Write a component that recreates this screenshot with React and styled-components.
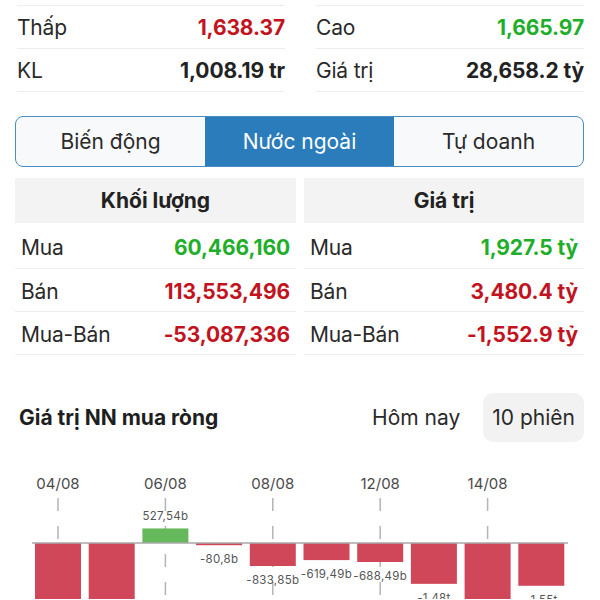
import React from "react";
import styled, { createGlobalStyle } from "styled-components";

const GlobalStyle = createGlobalStyle`
  body {
    margin: 0;
    background: #ffffff;
    font-family: Inter, "Noto Sans", sans-serif;
    color: #222;
  }
`;

const RED = "#c2141f";
const GREEN = "#1fae2a";

const Page = styled.div`
  width: 600px;
  height: 600px;
  overflow: hidden;
  background: #fff;
`;

const StatsGrid = styled.div`
  display: grid;
  grid-template-columns: 268px 268px;
  column-gap: 31px;
  padding: 5px 16px 0 17px;
`;

const StatCol = styled.div`
  border-top: 1px solid #ededed;
`;

const StatRow = styled.div`
  display: flex;
  align-items: center;
  justify-content: space-between;
  height: 42px;
  border-bottom: 1px solid #ededed;
  font-size: 21px;
`;

const Label = styled.span`
  color: #2a2a2a;
  letter-spacing: -0.2px;
`;

const Value = styled.span`
  font-weight: 700;
  color: ${(p) => p.color || "#222"};
  letter-spacing: -0.1px;
`;

const Tabs = styled.div`
  display: flex;
  margin: 24px 16px 0 15px;
  height: 51px;
  border: 1.5px solid #4a8dc4;
  border-radius: 8px;
  overflow: hidden;
  box-sizing: border-box;
  background: #f8f9fa;
`;

const Tab = styled.div`
  flex: 1;
  display: flex;
  align-items: center;
  justify-content: center;
  font-size: 21px;
  color: ${(p) => (p.active ? "#fff" : "#2a2a2a")};
  background: ${(p) => (p.active ? "#2a7cbb" : "transparent")};
`;

const Table = styled.div`
  display: grid;
  grid-template-columns: 281px 280px;
  column-gap: 8px;
  padding: 11px 16px 0 15px;
`;

const TableCol = styled.div``;

const TableHead = styled.div`
  height: 45px;
  display: flex;
  align-items: center;
  justify-content: center;
  background: #f3f3f3;
  font-size: 21px;
  font-weight: 700;
  color: #222;
`;

const TableRow = styled.div`
  display: flex;
  align-items: center;
  justify-content: space-between;
  box-sizing: border-box;
  height: ${(p) => (p.first ? "46px" : "43px")};
  padding: ${(p) => (p.first ? "4px" : "2px")} 6px 0;
  border-bottom: 1px solid #ededed;
  font-size: 21px;
`;

const ChartHeader = styled.div`
  display: flex;
  align-items: center;
  justify-content: space-between;
  margin-top: 38px;
  padding: 0 16px 0 19px;
`;

const ChartTitle = styled.div`
  font-size: 21px;
  font-weight: 700;
  color: #1e1e1e;
`;

const Periods = styled.div`
  display: flex;
  align-items: center;
`;

const Period = styled.div`
  height: 49px;
  padding: 0 9px;
  margin-left: ${(p) => (p.active ? "14px" : "0")};
  display: flex;
  align-items: center;
  border-radius: 10px;
  font-size: 21px;
  color: #2a2a2a;
  background: ${(p) => (p.active ? "#f2f2f2" : "transparent")};
`;

const ChartSvg = styled.svg`
  display: block;
  font-family: Inter, "Noto Sans", sans-serif;
`;

const bars = [
  { v: -2200 },
  { v: -2100 },
  { v: 527.54, label: "527,54b" },
  { v: -80.8, label: "-80,8b" },
  { v: -833.85, label: "-833,85b" },
  { v: -619.49, label: "-619,49b" },
  { v: -688.49, label: "-688,49b" },
  { v: -1480, label: "-1,48t" },
  { v: -2300 },
  { v: -1550, label: "-1,55t" },
];

const dates = ["04/08", "06/08", "08/08", "12/08", "14/08"];

const Chart = () => {
  const base = 101;
  const scale = 0.0276;
  const x0 = 35;
  const step = 53.7;
  const w = 46;
  return (
    <ChartSvg width="600" height="157" viewBox="0 0 600 157">
      {dates.map((d, i) => {
        const cx = x0 + step * i * 2 + w / 2;
        return (
          <g key={d}>
            <line
              x1={cx}
              x2={cx}
              y1={56}
              y2={157}
              stroke="#b4b4b4"
              strokeWidth="1.5"
              strokeDasharray="13 15"
            />
            <text x={cx} y={47} textAnchor="middle" fontSize="15" fill="#4a4a4a">
              {d}
            </text>
          </g>
        );
      })}
      {bars.map((b, i) => {
        const x = x0 + step * i;
        const h = Math.max(2, Math.abs(b.v) * scale);
        const pos = b.v > 0;
        const y = pos ? base - h : base;
        return (
          <g key={i}>
            <rect x={x} y={y} width={w} height={h} fill={pos ? "#66b95a" : "#d1475a"} />
            {b.label && (
              <text
                x={x + w / 2}
                y={pos ? y - 8 : y + h + 18}
                textAnchor="middle"
                fontSize="11.5"
                fill="#555"
                letterSpacing="0.3"
              >
                {b.label}
              </text>
            )}
          </g>
        );
      })}
      <line x1="32" x2="568" y1={base} y2={base} stroke="#a8a8a8" strokeWidth="1.5" />
    </ChartSvg>
  );
};

export default function App() {
  return (
    <Page>
      <GlobalStyle />
      <StatsGrid>
        <StatCol>
          <StatRow>
            <Label>Thấp</Label>
            <Value color={RED}>1,638.37</Value>
          </StatRow>
          <StatRow>
            <Label>KL</Label>
            <Value>1,008.19 tr</Value>
          </StatRow>
        </StatCol>
        <StatCol>
          <StatRow>
            <Label>Cao</Label>
            <Value color={GREEN}>1,665.97</Value>
          </StatRow>
          <StatRow>
            <Label>Giá trị</Label>
            <Value>28,658.2 tỷ</Value>
          </StatRow>
        </StatCol>
      </StatsGrid>

      <Tabs>
        <Tab>Biến động</Tab>
        <Tab active>Nước ngoài</Tab>
        <Tab>Tự doanh</Tab>
      </Tabs>

      <Table>
        <TableCol>
          <TableHead>Khối lượng</TableHead>
          <TableRow first>
            <Label>Mua</Label>
            <Value color={GREEN}>60,466,160</Value>
          </TableRow>
          <TableRow>
            <Label>Bán</Label>
            <Value color={RED}>113,553,496</Value>
          </TableRow>
          <TableRow>
            <Label>Mua-Bán</Label>
            <Value color={RED}>-53,087,336</Value>
          </TableRow>
        </TableCol>
        <TableCol>
          <TableHead>Giá trị</TableHead>
          <TableRow first>
            <Label>Mua</Label>
            <Value color={GREEN}>1,927.5 tỷ</Value>
          </TableRow>
          <TableRow>
            <Label>Bán</Label>
            <Value color={RED}>3,480.4 tỷ</Value>
          </TableRow>
          <TableRow>
            <Label>Mua-Bán</Label>
            <Value color={RED}>-1,552.9 tỷ</Value>
          </TableRow>
        </TableCol>
      </Table>

      <ChartHeader>
        <ChartTitle>Giá trị NN mua ròng</ChartTitle>
        <Periods>
          <Period>Hôm nay</Period>
          <Period active>10 phiên</Period>
        </Periods>
      </ChartHeader>

      <Chart />
    </Page>
  );
}
